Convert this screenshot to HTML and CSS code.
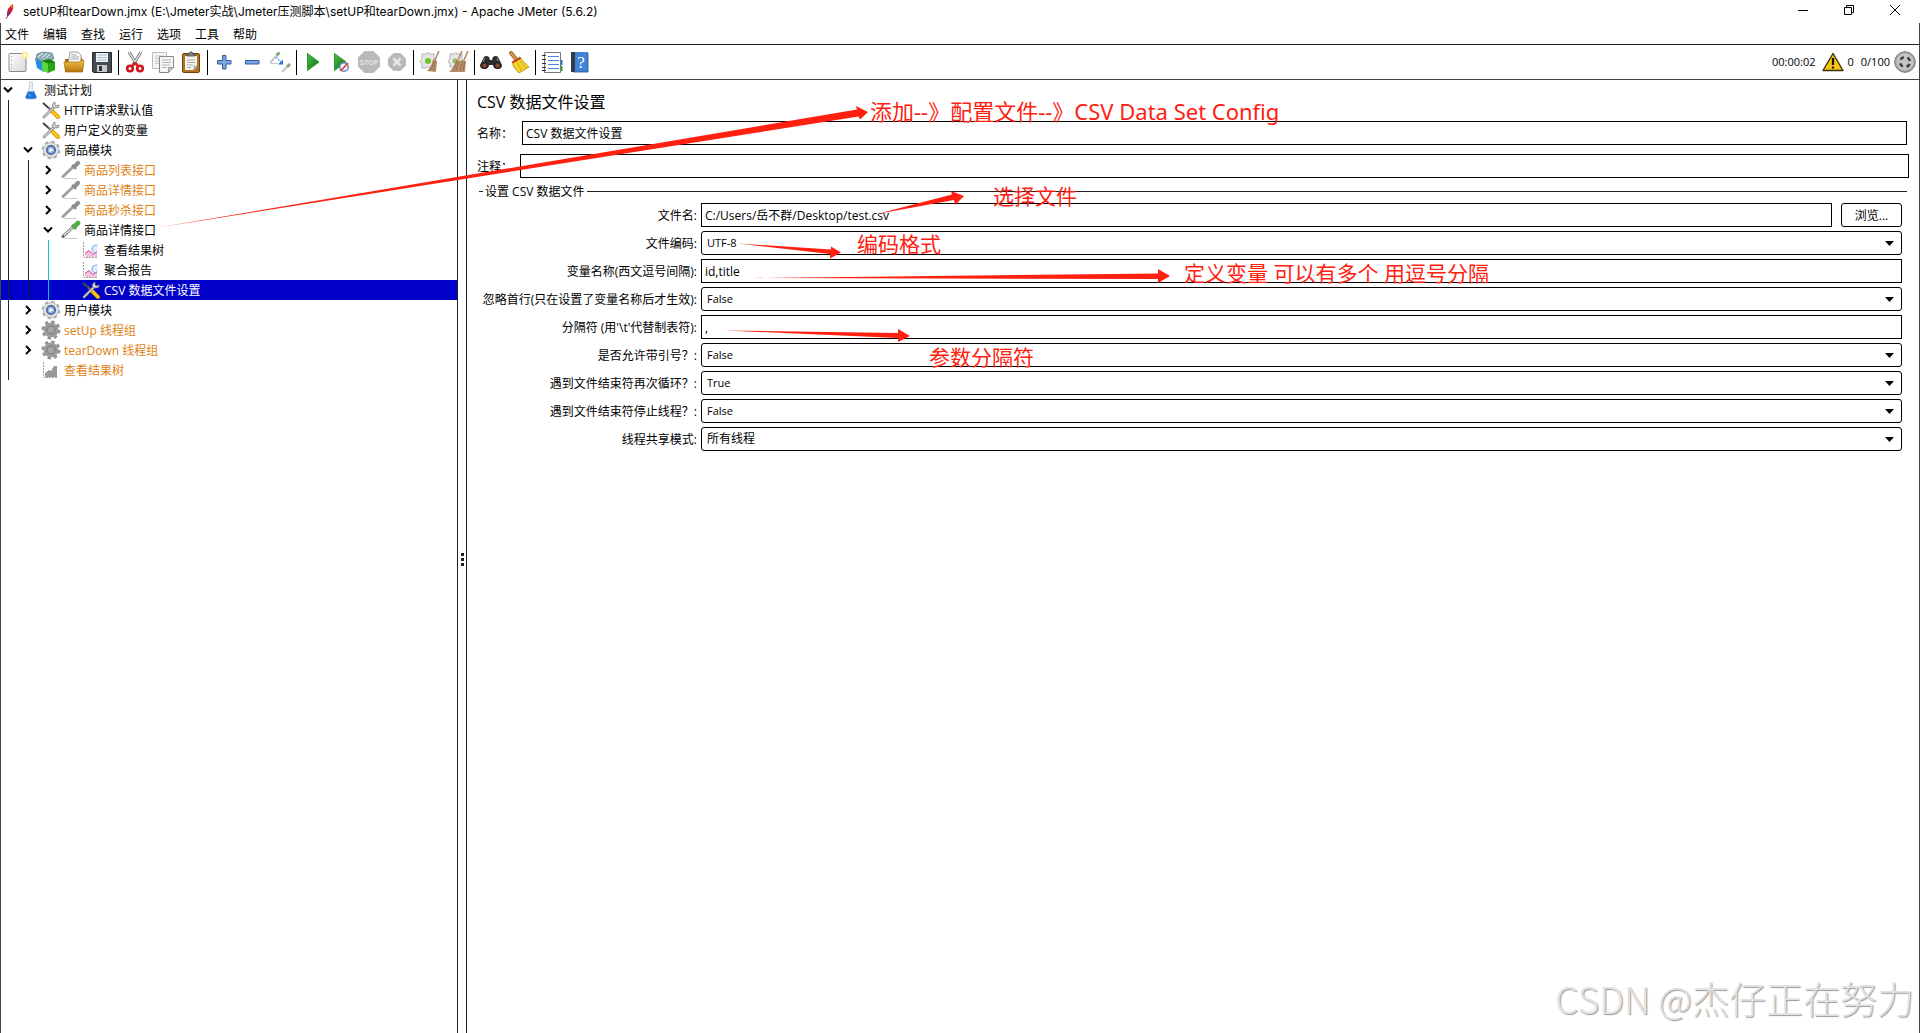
FILE: index.html
```
<!DOCTYPE html>
<html lang="zh-CN">
<head>
<meta charset="utf-8">
<title>Apache JMeter (5.6.2)</title>
<link rel="stylesheet" href="styles.css">
</head>
<body>
<svg class="defs" aria-hidden="true">
  <defs>
    <linearGradient id="gPaper" x1="0" y1="0" x2="1" y2="1"><stop offset="0" stop-color="#fff"/><stop offset="1" stop-color="#d8d8d8"/></linearGradient>
    <linearGradient id="gGreen" x1="0" y1="0" x2="1" y2="1"><stop offset="0" stop-color="#4cc04a"/><stop offset="1" stop-color="#0a6a10"/></linearGradient>
    <linearGradient id="gGold" x1="0" y1="0" x2="0" y2="1"><stop offset="0" stop-color="#efc04a"/><stop offset="1" stop-color="#b87408"/></linearGradient>
    <symbol id="i-tools" viewBox="0 0 20 20">
      <path d="M2 3l8 7" stroke="#666" stroke-width="2.200"/>
      <path d="M2 3l5 4.500" stroke="#222" stroke-width="1"/>
      <path d="M10.500 10.500l6.500 6.500" stroke="#c98a00" stroke-width="4" stroke-linecap="round"/>
      <path d="M10.500 10.500l6.500 6.500" stroke="#fbc813" stroke-width="2.600" stroke-linecap="round"/>
      <path d="M3 17L13 7" stroke="#777" stroke-width="2.600" stroke-linecap="round"/>
      <path d="M3 17L13 7" stroke="#ddd" stroke-width="1.200" stroke-linecap="round"/>
      <path d="M14 2q-3 1-2.500 4.500Q13 9 17.500 7.500L18 5l-3 1-1-1.500z" fill="#ddd" stroke="#777" stroke-width=".8"/>
    </symbol>
    <symbol id="i-gear" viewBox="0 0 20 20">
      <circle cx="10" cy="10" r="8" fill="none" stroke="#aaa" stroke-width="2.600" stroke-dasharray="3.300 2.983"/>
      <circle cx="10" cy="10" r="7.500" fill="#e2e2e2" stroke="#b0b0b0" stroke-width=".8"/>
      <circle cx="10" cy="10" r="4.200" fill="#8fb3e3" stroke="#3f5f96" stroke-width="1.500"/>
      <path d="M8.500 7.700l4 2.300-4 2.300z" fill="#fff"/>
    </symbol>
    <symbol id="i-gear-off" viewBox="0 0 20 20">
      <circle cx="10" cy="10" r="8" fill="none" stroke="#909090" stroke-width="3" stroke-dasharray="3.300 2.983"/>
      <circle cx="10" cy="10" r="7.500" fill="#9d9d9d"/>
      <circle cx="10" cy="10" r="4" fill="#a5a5a5" stroke="#858585" stroke-width="1.400"/>
    </symbol>
    <symbol id="i-pipette" viewBox="0 0 20 20">
      <path d="M3 18.500h13" stroke="#ccc"/>
      <path d="M2 16.500L12 7" stroke="#666" stroke-width="3" stroke-linecap="round"/>
      <path d="M3 15.500L12 7" stroke="#e4e4e4" stroke-width="1.500"/>
      <path d="M11 5l4 4" stroke="#2c6b22" stroke-width="2"/>
      <path d="M13.500 6.500l3.500-3.500" stroke="#58a845" stroke-width="4.600" stroke-linecap="round"/>
    </symbol>
    <symbol id="i-pipette-off" viewBox="0 0 20 20">
      <path d="M3 18.500h13" stroke="#ccc"/>
      <path d="M2 16.500L12 7" stroke="#a0a0a0" stroke-width="3" stroke-linecap="round"/>
      <path d="M11 5l4 4" stroke="#808080" stroke-width="2"/>
      <path d="M13.500 6.500l3.500-3.500" stroke="#8e8e8e" stroke-width="4.200" stroke-linecap="round"/>
    </symbol>
    <symbol id="i-chart" viewBox="0 0 20 20">
      <path d="M2.500 2v15.500H17" fill="none" stroke="#a0a0a0" stroke-dasharray="2 1"/>
      <path d="M4 13l4-3 4 4 4-3v6H4z" fill="#f6c2df"/>
      <path d="M4 13.500l4-3 4 4 4-3" fill="none" stroke="#d0469a"/>
      <circle cx="13.500" cy="8.500" r="3.200" fill="#dcecff"/>
      <path d="M16.500 5q-5.500 0-5.500 4t5 4" fill="none" stroke="#79a8e0"/>
    </symbol>
    <symbol id="i-chart-off" viewBox="0 0 20 20">
      <path d="M2.500 2v15.500H17" fill="none" stroke="#a0a0a0" stroke-dasharray="2 1"/>
      <path d="M4 17v-4l4-3 2 1 3-5h3v11z" fill="#999"/>
    </symbol>
    <symbol id="i-flask" viewBox="0 0 20 20">
      <path d="M8.500 2h3v6l4 9q0 2-2 2h-7q-2 0-2-2l4-9z" fill="#eaf1f8" stroke="#b4c0cc" stroke-width=".7"/>
      <path d="M7 11.500h6l2.500 5.500q0 1.800-2 1.800h-7q-2 0-2-1.800z" fill="#1d72d8"/>
      <path d="M7 14l3 2" stroke="#7ab6f5"/>
    </symbol>
    <symbol id="i-open" viewBox="0 0 10 20"><path d="M1 7.500l4 4 4-4" fill="none" stroke="#000" stroke-width="2"/></symbol>
    <symbol id="i-closed" viewBox="0 0 10 20"><path d="M3 6l4 4-4 4" fill="none" stroke="#000" stroke-width="2"/></symbol>
  </defs>
</svg>

<div class="window">
  <header class="titlebar">
    <svg class="feather" viewBox="0 0 12 16"><path d="M2 15L6 8" stroke="#b03070" stroke-width="1"/><path d="M3 12Q3 3 9 0q1 5-2 9-1 2-4 3z" fill="#d22128"/><path d="M3 12Q3 7 5 4l1 6q-1 2-3 2z" fill="#8b2a80"/><path d="M6 3q1-2 3-3 0 3-1 4z" fill="#f0761d"/></svg>
    <h1 class="title">setUP和tearDown.jmx (E:\Jmeter实战\Jmeter压测脚本\setUP和tearDown.jmx) - Apache JMeter (5.6.2)</h1>
    <div class="controls">
      <button class="control" aria-label="最小化"><svg viewBox="0 0 12 12"><path d="M1 6.500h10"/></svg></button>
      <button class="control" aria-label="还原"><svg viewBox="0 0 12 12"><path d="M1.500 3.500h7v7h-7zM3.500 3V1.500h7v7H9"/></svg></button>
      <button class="control" aria-label="关闭"><svg viewBox="0 0 12 12"><path d="M1 1l10 10M11 1L1 11"/></svg></button>
    </div>
  </header>

  <div class="frame">
  <nav class="menubar">
    <button class="menu">文件</button><button class="menu">编辑</button><button class="menu">查找</button><button class="menu">运行</button><button class="menu">选项</button><button class="menu">工具</button><button class="menu">帮助</button>
  </nav>

  <div class="toolbar">
    <button class="tool" aria-label="新建"><svg viewBox="0 0 22 22"><rect x="2" y="2.500" width="17" height="18" rx="1" fill="url(#gPaper)" stroke="#8a8a8a"/><path d="M4.500 5v13" stroke="#aaa" stroke-dasharray="1 3"/><circle cx="18" cy="4" r="3.500" fill="#fbf08c"/><circle cx="18" cy="4" r="1.500" fill="#fff"/></svg></button>
    <button class="tool" aria-label="模板"><svg viewBox="0 0 22 22"><path d="M0 7l9 2v12l-7-4z" fill="#1f8fd8"/><path d="M2 3l6-2 9 1 2 6-10 3-8-3z" fill="#8fb0b8" stroke="#5d8790" stroke-width=".8"/><path d="M3 6l5-4M7 7l5-5M11 7l4-4" stroke="#e6eef0"/><path d="M7 10l7-2 6 3v8l-7 3-6-3z" fill="#2aa318"/><path d="M7 10l6 2v10l-6-3z" fill="#5bd640"/><path d="M7 10l7-2 6 3-7 1.500z" fill="#1c7d10"/></svg></button>
    <button class="tool" aria-label="打开"><svg viewBox="0 0 22 22"><path d="M2 8h4l1-2h11l2 3v11H2z" fill="#a86c0c"/><path d="M7 1h8l3 3v8H5z" fill="#f6f6f6" stroke="#8c8c8c" stroke-width=".8"/><path d="M8 4h6M8 6h8M7 8h9" stroke="#999" stroke-width=".8"/><path d="M1 11h15l3-1.500h2L19.500 21H2.500z" fill="url(#gGold)" stroke="#a46b0c" stroke-width=".7"/></svg></button>
    <button class="tool" aria-label="保存"><svg viewBox="0 0 22 22"><path d="M1.500 1.500h19v20h-18l-1-1z" fill="#474b52" stroke="#24272b"/><path d="M5 2h12v9H5z" fill="#edf3f8"/><path d="M6 4h10M6 6.500h10M6 9h10" stroke="#9cb0c0" stroke-width=".8"/><path d="M6 14h10v7H6z" fill="#c9cacc"/><path d="M8 15h3v5H8z" fill="#333"/></svg></button>
    <span class="sep"></span>
    <button class="tool" aria-label="剪切"><svg viewBox="0 0 22 22"><path d="M5 1l8 13M17 1L9 14" stroke="#777" stroke-width="3"/><path d="M5 1l8 13M17 1L9 14" stroke="#eee" stroke-width="1.300"/><ellipse cx="6" cy="17.500" rx="2.800" ry="2.800" fill="none" stroke="#d4141c" stroke-width="2.600"/><ellipse cx="16" cy="17.500" rx="2.800" ry="2.800" fill="none" stroke="#d4141c" stroke-width="2.600"/><path d="M8 15l3-3 3 3" fill="none" stroke="#d4141c" stroke-width="2"/></svg></button>
    <button class="tool" aria-label="复制"><svg viewBox="0 0 22 22"><path d="M.5 1.500h14v16H.5z" fill="#f5f5f5" stroke="#bdbdbd"/><path d="M3 5h9M3 7.500h9M3 10h9M3 12.500h4" stroke="#c6c6c6"/><path d="M7.500 5.500h14v11l-5 5h-9z" fill="#f5f5f4" stroke="#888"/><path d="M10 9h9M10 11.500h9M10 14h8M10 16.500h5" stroke="#b5b5b5"/><path d="M16.500 21.500v-5h5z" fill="#ccc" stroke="#888" stroke-width=".8"/></svg></button>
    <button class="tool" aria-label="粘贴"><svg viewBox="0 0 22 22"><rect x="2.500" y="2.500" width="17" height="19" rx="1.500" fill="#b47421" stroke="#6e430c"/><path d="M5 5h12v10l-3 4H5z" fill="#f4f4f2"/><path d="M7 9h8M7 11.500h8M7 14h6M7 16.500h4" stroke="#aaa"/><path d="M7 5V3h2l1-2h2l1 2h2v2z" fill="#868a82" stroke="#444" stroke-width=".8"/><path d="M14 19v-4h3z" fill="#ccc" stroke="#888" stroke-width=".6"/></svg></button>
    <span class="sep"></span>
    <button class="tool" aria-label="展开"><svg viewBox="0 0 22 22"><path d="M9.500 4.500h3.500v5h5v3.500h-5v5H9.500v-5h-5V9.500h5z" fill="#7da6de" stroke="#2e5fa8"/></svg></button>
    <button class="tool" aria-label="折叠"><svg viewBox="0 0 22 22"><path d="M4.500 9.500h13.500V13H4.500z" fill="#7da6de" stroke="#2e5fa8"/></svg></button>
    <button class="tool" aria-label="切换"><svg viewBox="0 0 22 22"><path d="M1 12l6-7" stroke="#c4c4c4" stroke-width="2"/><path d="M7.500 4.500l3-3" stroke="#7fa876" stroke-width="3"/><path d="M13 21l5-5" stroke="#c4c4c4" stroke-width="2"/><path d="M18 16l3-3" stroke="#7fa876" stroke-width="3"/><path d="M2 12.500h7" stroke="#ccc"/><path d="M7 6l5 5" stroke="#5c9be8" stroke-width="1.300" stroke-dasharray="2 1"/><path d="M14 8.500v5H9z" fill="#2477df"/></svg></button>
    <span class="sep"></span>
    <button class="tool" aria-label="启动"><svg viewBox="0 0 22 22"><path d="M5.500 2.500L17 11 5.500 19.500z" fill="url(#gGreen)" stroke="#2b9a30"/></svg></button>
    <button class="tool" aria-label="不停顿开始"><svg viewBox="0 0 22 22"><path d="M4.500 2.500L16 11 4.500 19.500z" fill="url(#gGreen)" stroke="#2b9a30"/><circle cx="14" cy="16" r="4.300" fill="#eef3fb" stroke="#5c86c4" stroke-width="1.400"/><path d="M10.500 20L18 12" stroke="#e0392e" stroke-width="1.600"/></svg></button>
    <button class="tool" aria-label="停止" disabled><svg viewBox="0 0 22 22"><path d="M6.500 0h9L22 6.500v9L15.500 22h-9L0 15.500v-9z" fill="#b9b9b9"/><text class="stop-text" x="11" y="14" text-anchor="middle">STOP</text></svg></button>
    <button class="tool" aria-label="关闭线程" disabled><svg viewBox="0 0 22 22"><path d="M7.500 2h7L20 7.500v7L14.500 20h-7L2 14.500v-7z" fill="#b9b9b9"/><path d="M7.500 7.500l7 7M14.500 7.500l-7 7" stroke="#e6e6e6" stroke-width="2.600"/></svg></button>
    <span class="sep"></span>
    <button class="tool" aria-label="清除"><svg viewBox="0 0 22 22"><path d="M3 3h4q1-3 4 0h4v5q3 1 0 4v5h-4q-2-3-4 0H3v-5q-4-1 0-4z" fill="#e6e6e6" stroke="#b4b4b4"/><circle cx="9" cy="10" r="3" fill="#6fc52b"/><path d="M20 0l-4 9" stroke="#b58b62" stroke-width="1.600"/><path d="M14 8l4 2-1 11-9-1q5-5 6-12z" fill="#b89069"/><path d="M15 10l-4 10M16.500 10L14 20" stroke="#8a6946" stroke-width=".8"/></svg></button>
    <button class="tool" aria-label="清除全部"><svg viewBox="0 0 22 22"><path d="M3 3h4q1-3 4 0h4v5q3 1 0 4v4H3v-4q-4-1 0-4z" fill="#e6e6e6" stroke="#b4b4b4"/><circle cx="8" cy="10" r="2.500" fill="#8fc654"/><path d="M15 0l-4 9M21 0l-4 9" stroke="#b58b62" stroke-width="1.600"/><path d="M9 8l3 2 2-1 5 1-1 11H2q6-5 7-13z" fill="#b89069"/><path d="M10 10L6 20M11.500 10L9 20M16 10l-3 10M18 10l-2 10" stroke="#8a6946" stroke-width=".8"/></svg></button>
    <span class="sep"></span>
    <button class="tool" aria-label="查找"><svg viewBox="0 0 22 22"><path d="M4 6q2-2 5 0l1 3h2l1-3q3-2 5 0l4 8q0 4-4 4-5 0-5-4h-4q0 4-5 4-4 0-4-4z" fill="#2d2d30"/><circle cx="4.500" cy="14.500" r="2.800" fill="#8b4a2a" stroke="#111"/><circle cx="17.500" cy="14.500" r="2.800" fill="#8b4a2a" stroke="#111"/><path d="M5 7l-2 4M17 7l1 3" stroke="#8d8d92"/></svg></button>
    <button class="tool" aria-label="重置查找"><svg viewBox="0 0 22 22"><path d="M3 2l5 6" stroke="#8a4b12" stroke-width="3.600" stroke-linecap="round"/><path d="M3 2l5 6" stroke="#e29a4c" stroke-width="2" stroke-linecap="round"/><path d="M4 11l8-5q3 5 9 10l-10 6q-6-5-7-11z" fill="#f3d42c" stroke="#b08a08" stroke-width=".8"/><path d="M4.500 11.500L12.500 7" stroke="#d2281c" stroke-width="2"/><path d="M9 12l5 8M12 10l6 7" stroke="#c19c10" stroke-width=".8"/></svg></button>
    <span class="sep"></span>
    <button class="tool" aria-label="函数助手"><svg viewBox="0 0 22 22"><path d="M3.500 1.500h16v20h-16z" fill="#fff" stroke="#777"/><path d="M1 4.500h4M1 8.500h4M1 12.500h4M1 16.500h4M1 19.500h4" stroke="#333"/><path d="M7 5.500h11M7 9.500h11M7 13.500h11M7 17.500h11" stroke="#4a86d8" stroke-width="1.200"/><path d="M20 9h1.500v5H20z" fill="#1f70d8"/><path d="M20 15h1.500v5H20z" fill="#2aa52a"/></svg></button>
    <button class="tool" aria-label="帮助"><svg viewBox="0 0 22 22"><path d="M2 1h17v20H2z" fill="#3f83d6"/><path d="M2 1h4v20H2z" fill="#333c48"/><path d="M19 2v19H4" fill="none" stroke="#24508c" stroke-width=".8"/><text class="help-text" x="12" y="17" text-anchor="middle">?</text></svg></button>
    <div class="status">
      <span>00:00:02</span>
      <svg class="warn" viewBox="0 0 22 20"><path d="M11 1.500L21 18.500H1z" fill="#f6c614" stroke="#3a3108" stroke-width="1.400" stroke-linejoin="round"/><path d="M11 6v7M11 14.500v2" stroke="#111" stroke-width="2.200"/></svg>
      <span>0</span>
      <span class="threads">0/100</span>
      <svg class="ring" viewBox="0 0 22 22"><circle cx="11" cy="11" r="10.300" fill="#a8a8a8" stroke="#777"/><circle cx="11" cy="11" r="8.500" fill="#c4c4c4"/><circle cx="11" cy="11" r="5" fill="none" stroke="#3c3c3c" stroke-width="2.400" stroke-dasharray="4 3.854" stroke-dashoffset="-2"/></svg>
    </div>
  </div>

  <div class="workspace">
    <ul class="tree">
      <li class="node"><svg class="twist"><use href="#i-open"/></svg><svg class="icon"><use href="#i-flask"/></svg><span>测试计划</span></li>
      <li class="node"><i class="guide"></i><i class="blank"></i><svg class="icon"><use href="#i-tools"/></svg><span>HTTP请求默认值</span></li>
      <li class="node"><i class="guide"></i><i class="blank"></i><svg class="icon"><use href="#i-tools"/></svg><span>用户定义的变量</span></li>
      <li class="node"><i class="guide"></i><svg class="twist"><use href="#i-open"/></svg><svg class="icon"><use href="#i-gear"/></svg><span>商品模块</span></li>
      <li class="node off"><i class="guide"></i><i class="guide"></i><svg class="twist"><use href="#i-closed"/></svg><svg class="icon"><use href="#i-pipette-off"/></svg><span>商品列表接口</span></li>
      <li class="node off"><i class="guide"></i><i class="guide"></i><svg class="twist"><use href="#i-closed"/></svg><svg class="icon"><use href="#i-pipette-off"/></svg><span>商品详情接口</span></li>
      <li class="node off"><i class="guide"></i><i class="guide"></i><svg class="twist"><use href="#i-closed"/></svg><svg class="icon"><use href="#i-pipette-off"/></svg><span>商品秒杀接口</span></li>
      <li class="node"><i class="guide"></i><i class="guide"></i><svg class="twist"><use href="#i-open"/></svg><svg class="icon"><use href="#i-pipette"/></svg><span>商品详情接口</span></li>
      <li class="node"><i class="guide"></i><i class="guide"></i><i class="guide active"></i><i class="blank"></i><svg class="icon"><use href="#i-chart"/></svg><span>查看结果树</span></li>
      <li class="node"><i class="guide"></i><i class="guide"></i><i class="guide active"></i><i class="blank"></i><svg class="icon"><use href="#i-chart"/></svg><span>聚合报告</span></li>
      <li class="node selected"><i class="guide"></i><i class="guide"></i><i class="guide active"></i><i class="blank"></i><svg class="icon"><use href="#i-tools"/></svg><span>CSV 数据文件设置</span></li>
      <li class="node"><i class="guide"></i><svg class="twist"><use href="#i-closed"/></svg><svg class="icon"><use href="#i-gear"/></svg><span>用户模块</span></li>
      <li class="node off"><i class="guide"></i><svg class="twist"><use href="#i-closed"/></svg><svg class="icon"><use href="#i-gear-off"/></svg><span>setUp 线程组</span></li>
      <li class="node off"><i class="guide"></i><svg class="twist"><use href="#i-closed"/></svg><svg class="icon"><use href="#i-gear-off"/></svg><span>tearDown 线程组</span></li>
      <li class="node off"><i class="guide"></i><i class="blank"></i><svg class="icon"><use href="#i-chart-off"/></svg><span>查看结果树</span></li>
    </ul>

    <div class="splitter"><i></i><i></i><i></i></div>

    <main class="panel">
      <h2 class="heading">CSV 数据文件设置</h2>
      <div class="line name"><label for="name">名称：</label><input id="name" class="field" type="text" value="CSV 数据文件设置"></div>
      <div class="line comment"><label for="comment">注释：</label><input id="comment" class="field" type="text"></div>

      <fieldset class="config">
        <legend>设置 CSV 数据文件</legend>
        <label for="file">文件名:</label>
        <div class="file"><input id="file" class="field" type="text" value="C:/Users/岳不群/Desktop/test.csv"><button class="browse">浏览...</button></div>
        <label for="enc">文件编码:</label>
        <select id="enc" class="field"><option>UTF-8</option></select>
        <label for="vars">变量名称(西文逗号间隔):</label>
        <input id="vars" class="field" type="text" value="id,title">
        <label for="skip">忽略首行(只在设置了变量名称后才生效):</label>
        <select id="skip" class="field"><option>False</option></select>
        <label for="delim">分隔符 (用'\t'代替制表符):</label>
        <input id="delim" class="field" type="text" value=",">
        <label for="quoted">是否允许带引号？:</label>
        <select id="quoted" class="field"><option>False</option></select>
        <label for="recycle">遇到文件结束符再次循环？:</label>
        <select id="recycle" class="field"><option>True</option></select>
        <label for="stop">遇到文件结束符停止线程？:</label>
        <select id="stop" class="field"><option>False</option></select>
        <label for="share">线程共享模式:</label>
        <select id="share" class="field han"><option>所有线程</option></select>
      </fieldset>
    </main>
  </div>
  </div>

  <svg class="arrows" width="1200" height="360" aria-hidden="true">
    <path d="M155 228L857 109.500 856 106 868 112 860 119.500 858.500 116.500z"/>
    <path d="M877 214L952 194.500 951 191 964 196 955 205 954 200z"/>
    <path d="M738 243.500L831 249.500 831 246.500 841 252.500 830 258.500 830 254z"/>
    <path d="M752 278L1158 273.500V269l12 7-12 7v-4z"/>
    <path d="M725 330.500L898 333V329l12 7-12 6v-4z"/>
  </svg>
  <p class="note note-add">添加--》配置文件--》CSV Data Set Config</p>
  <p class="note note-file">选择文件</p>
  <p class="note note-enc">编码格式</p>
  <p class="note note-vars">定义变量 可以有多个 用逗号分隔</p>
  <p class="note note-delim">参数分隔符</p>
  <p class="watermark">CSDN @杰仔正在努力</p>
</div>
</body>
</html>
```
FILE: styles.css
```
* { box-sizing: border-box; }

body {
  margin: 0;
  background: #fff;
  color: #000;
  font: 12px/16px "Open Sans", "Noto Sans CJK SC", sans-serif;
}

h1, h2, p, ul { margin: 0; padding: 0; font-weight: normal; }
button { padding: 0; border: 0; background: none; color: inherit; font: inherit; }
svg { display: block; fill: none; }
.defs { position: absolute; width: 0; height: 0; }

.window {
  position: relative;
  display: flex;
  flex-direction: column;
  min-height: 100vh;
  overflow: hidden;
}

/* Title bar */
.titlebar { display: flex; align-items: center; height: 23px; padding-left: 4px; }
.feather { width: 12px; height: 16px; }
.title {
  flex: 1;
  padding-left: 7px;
  font: 12px/20px Inter, "Noto Sans CJK SC", sans-serif;
}
.controls { display: flex; padding: 0 2px 3px 0; }
.control { display: grid; place-items: center; width: 46px; height: 18px; }
.control svg { width: 12px; height: 12px; stroke: #000; }

.frame {
  flex: 1;
  display: flex;
  flex-direction: column;
  border: solid #444;
  border-width: 0 1px;
}

/* Menu and tool bars */
.menubar {
  display: flex;
  gap: 14px;
  height: 22px;
  padding: 2px 0 0 4px;
  border-bottom: 1px solid #222;
}
.toolbar {
  display: flex;
  align-items: center;
  height: 35px;
  padding-left: 3px;
  border-bottom: 1px solid #444;
}
.tool { display: grid; place-items: center; width: 28px; height: 28px; }
.tool svg { width: 22px; height: 22px; }
.sep { width: 1px; height: 25px; margin: 0 2px; background: #000; }
.stop-text { font: bold 7px "Liberation Sans", sans-serif; fill: #e4e4e4; }
.help-text { font: 17px "Liberation Serif", serif; fill: #fff; }
.status { display: flex; align-items: center; margin-left: auto; padding-right: 3px; font-size: 11px; }
.warn { width: 22px; height: 20px; margin: 0 4px 0 6px; }
.threads { margin: 0 4px 0 7px; }
.ring { width: 22px; height: 22px; }

/* Test plan tree */
.workspace { flex: 1; display: flex; }
.tree { width: 456px; list-style: none; }
.node { display: flex; align-items: center; height: 20px; white-space: nowrap; }
.node span { padding: 2px 0 0 3px; }
.twist { width: 14px; height: 20px; margin-right: 6px; }
.icon { width: 20px; height: 20px; }
.blank { width: 20px; }
.guide {
  width: 20px;
  height: 20px;
  background: linear-gradient(#222, #222) 7px 0 / 1px 100% no-repeat;
}
.guide.active { background-image: linear-gradient(#00c8d8, #00c8d8); }
.off { color: #e08214; }
.selected { background: #0000c8; color: #fff; }

.splitter {
  display: flex;
  flex-direction: column;
  align-items: center;
  justify-content: center;
  gap: 2px;
  width: 10px;
  padding-top: 5px;
  border: solid #222;
  border-width: 0 1px;
}
.splitter i { width: 3px; height: 3px; background: #222; }

/* Element editor */
.panel { flex: 1; padding: 10px 10px 0 10px; }
.heading { font-size: 16px; line-height: 24px; }
.line { display: flex; align-items: center; }
.line label { flex: none; padding-top: 2px; }
.name { margin: 7px 2px 9px 0; }
.name label { width: 45px; }
.comment label { width: 43px; }

.field {
  flex: 1;
  min-width: 0;
  height: 24px;
  padding: 0 3px;
  border: 1px solid #000;
  background: #fff;
  color: #000;
  font: inherit;
}
select.field {
  appearance: none;
  padding: 0 5px;
  border-radius: 3px;
  font-size: 11px;
  background: #fff url("data:image/svg+xml,%3Csvg xmlns='http://www.w3.org/2000/svg' width='9' height='5'%3E%3Cpath d='M0 0h9L4.500 5z'/%3E%3C/svg%3E") right 7px center no-repeat;
}
select.han { font-size: 12px; }

.config {
  display: grid;
  grid-template-columns: 217px 1fr;
  gap: 4px;
  align-items: center;
  margin: 5px 2px 0 2px;
  padding: 4px 5px 5px 1px;
  border: 0;
  border-top: 1px solid #222;
}
.config legend { margin-left: 3px; padding: 2px 2px 0; line-height: 14px; }
.config label { padding-top: 2px; text-align: right; white-space: nowrap; }
.file { display: flex; gap: 9px; }
.browse { width: 61px; height: 24px; padding-top: 2px; border: 1px solid #000; border-radius: 3px; }

/* Annotations lying over the window */
.arrows { position: absolute; top: 0; left: 0; fill: #ff2010; pointer-events: none; }
.note {
  position: absolute;
  color: #ff2010;
  font: 21px/24px "Noto Sans", "Noto Sans CJK SC", sans-serif;
  white-space: nowrap;
}
.note-add { left: 870px; top: 99px; font-size: 22px; }
.note-file { left: 993px; top: 184px; }
.note-enc { left: 857px; top: 232px; }
.note-vars { left: 1184px; top: 261px; }
.note-delim { left: 929px; top: 345px; }
.watermark {
  position: absolute;
  right: 6px;
  bottom: 13px;
  color: #e2e2e2;
  font: 300 37px/44px "Noto Sans CJK SC", sans-serif;
  text-shadow: 1px 1px 1px #999;
  white-space: nowrap;
}
```
